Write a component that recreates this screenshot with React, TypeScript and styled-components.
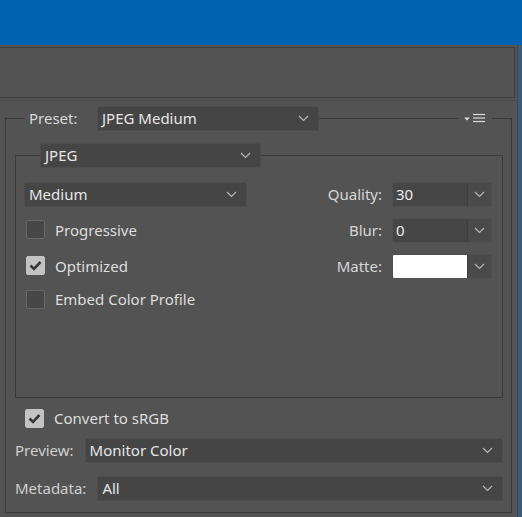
import styled, { createGlobalStyle } from "styled-components";

const GlobalStyle = createGlobalStyle`
  html, body {
    margin: 0;
    padding: 0;
    background: #535353;
  }
  body {
    font-family: "Noto Sans", "Liberation Sans", sans-serif;
    font-size: 15px;
    color: #dadada;
  }
`;

const Screen = styled.div`
  width: 522px;
  height: 517px;
  overflow: hidden;
  display: flex;
  flex-direction: column;
  background: #535353;
`;

const TitleBar = styled.div`
  height: 45px;
  flex-shrink: 0;
  background: #0063b1;
`;

const Body = styled.div`
  flex: 1;
  display: flex;
`;

const Dialog = styled.div`
  width: 517px;
  display: flex;
  flex-direction: column;
`;

const EdgeStrip = styled.div`
  flex: 1;
  border-left: 1px solid #454545;
  background: #3a5b7c;
`;

const TopPanel = styled.div`
  margin: 2px 2px 0 0;
  height: 49px;
  border: 1px solid #3d3d3d;
  border-left: none;
`;

const SettingsFrame = styled.div`
  margin-top: 2px;
  flex: 1;
  padding: 5px 5px 0 5px;
  border-top: 1px solid #4a4a4a;
`;

/* group header: a line broken by a control, like a fieldset legend */
const Header = styled.div`
  display: flex;
  align-items: center;
  height: 25px;
`;

const Line = styled.div<{ $w?: number; $edge?: "left" | "right" }>`
  align-self: flex-end;
  height: 12px;
  ${(p) => (p.$w ? `width: ${p.$w}px;` : "flex: 1;")}
  border-top: 1px solid #3a3a3a;
  ${(p) => (p.$edge ? `border-${p.$edge}: 1px solid #3a3a3a;` : "")}
`;

const GroupBody = styled.div<{ $pad: string }>`
  border: 1px solid #3a3a3a;
  border-top: none;
  padding: ${(p) => p.$pad};
`;

const HeaderLabel = styled.span`
  padding: 0 4px;
  width: 64px;
  color: #d8d8d8;
  margin-top: -1px;
`;

const Select = styled.div<{ $w?: number; $h?: number }>`
  display: flex;
  align-items: center;
  justify-content: space-between;
  box-sizing: border-box;
  ${(p) => (p.$w ? `width: ${p.$w}px;` : "flex: 1;")}
  height: ${(p) => p.$h ?? 25}px;
  padding: 0 9px 0 4px;
  background: #454545;
  border: 1px solid #4d4d4d;
  border-radius: 2px;
  color: #e6e6e6;
  white-space: nowrap;
`;

const SelectText = styled.span`
  margin-top: -1px;
`;

const Chevron = () => (
  <svg width="11" height="7" viewBox="0 0 11 7">
    <polyline points="1,1 5.5,5.5 10,1" fill="none" stroke="#b9b9b9" strokeWidth="1.1" />
  </svg>
);

const MenuIcon = styled.svg`
  margin: 0 6px 0 6px;
  flex-shrink: 0;
`;

const OptionsGrid = styled.div`
  display: grid;
  grid-template-columns: 223px 1fr;
  grid-template-rows: 25px 25px 25px 20px;
  row-gap: 11px;
`;

const RightCell = styled.div`
  display: flex;
  align-items: center;
  justify-content: flex-end;
  gap: 10px;
`;

const FieldLabel = styled.span`
  color: #d6d6d6;
  margin-top: -2px;
`;

const Combo = styled.div`
  display: flex;
  width: 100px;
  height: 25px;
  box-sizing: border-box;
  border: 1px solid #4f4f4f;
  border-radius: 2px;
  overflow: hidden;
`;

const ComboInput = styled.div<{ $swatch?: boolean }>`
  flex: 1;
  display: flex;
  align-items: center;
  padding-left: 3px;
  background: ${(p) => (p.$swatch ? "#ffffff" : "#464646")};
  color: #ececec;
  border-right: 1px solid #3e3e3e;
  span {
    margin-top: -1px;
  }
`;

const ComboButton = styled.div`
  width: 23px;
  display: flex;
  align-items: center;
  justify-content: center;
  background: #4a4a4a;
`;

const CheckRow = styled.label<{ $indent?: number }>`
  display: flex;
  align-items: center;
  gap: 10px;
  padding-left: ${(p) => p.$indent ?? 2}px;
  color: #dedede;
  span {
    margin-top: -2px;
  }
`;

const Box = styled.span<{ $on?: boolean }>`
  width: 19px;
  height: 19px;
  box-sizing: border-box;
  display: flex;
  align-items: center;
  justify-content: center;
  border-radius: 2px;
  border: 1px solid ${(p) => (p.$on ? "#c3c3c3" : "#686868")};
  background: ${(p) => (p.$on ? "#c3c3c3" : "#474747")};
`;

const Checkbox = ({ on }: { on?: boolean }) => (
  <Box $on={on}>
    {on && (
      <svg width="13" height="11" viewBox="0 0 13 11">
        <polyline points="1.5,5.5 5,9 11.5,2" fill="none" stroke="#383838" strokeWidth="2.6" />
      </svg>
    )}
  </Box>
);

const Bottom = styled.div`
  display: flex;
  flex-direction: column;
`;

const FormRow = styled.div<{ $mt: number }>`
  display: flex;
  align-items: center;
  gap: 11px;
  margin-top: ${(p) => p.$mt}px;
`;

const RowLabel = styled.span`
  color: #cfcfcf;
  margin-top: -2px;
`;

const App = () => {
  return (
    <>
      <GlobalStyle />
      <Screen>
        <TitleBar />
        <Body>
          <Dialog>
            <TopPanel />
            <SettingsFrame>
              <Header>
                <Line $w={19} $edge="left" />
                <HeaderLabel>Preset:</HeaderLabel>
                <Select $w={222}>
                  <SelectText>JPEG Medium</SelectText>
                  <Chevron />
                </Select>
                <Line />
                <MenuIcon width="22" height="12" viewBox="0 0 22 12">
                  <polygon points="0,4.5 6,4.5 3,7.5" fill="#dcdcdc" />
                  <line x1="9" y1="1.5" x2="21" y2="1.5" stroke="#dcdcdc" strokeWidth="1.2" />
                  <line x1="9" y1="5" x2="21" y2="5" stroke="#dcdcdc" strokeWidth="1.2" />
                  <line x1="9" y1="8.5" x2="21" y2="8.5" stroke="#dcdcdc" strokeWidth="1.2" />
                </MenuIcon>
                <Line $w={19} $edge="right" />
              </Header>
              <GroupBody $pad="12px 8px 11px 9px">
                <Header>
                  <Line $w={24} $edge="left" />
                  <Select $w={221}>
                    <SelectText>JPEG</SelectText>
                    <Chevron />
                  </Select>
                  <Line $edge="right" />
                </Header>
                <GroupBody $pad="14px 10px 87px 8px">
                  <OptionsGrid>
                    <Select $w={223}>
                      <SelectText>Medium</SelectText>
                      <Chevron />
                    </Select>
                    <RightCell>
                      <FieldLabel>Quality:</FieldLabel>
                      <Combo>
                        <ComboInput>
                          <span>30</span>
                        </ComboInput>
                        <ComboButton>
                          <Chevron />
                        </ComboButton>
                      </Combo>
                    </RightCell>
                    <CheckRow>
                      <Checkbox />
                      <span>Progressive</span>
                    </CheckRow>
                    <RightCell>
                      <FieldLabel>Blur:</FieldLabel>
                      <Combo>
                        <ComboInput>
                          <span>0</span>
                        </ComboInput>
                        <ComboButton>
                          <Chevron />
                        </ComboButton>
                      </Combo>
                    </RightCell>
                    <CheckRow>
                      <Checkbox on />
                      <span>Optimized</span>
                    </CheckRow>
                    <RightCell>
                      <FieldLabel>Matte:</FieldLabel>
                      <Combo>
                        <ComboInput $swatch />
                        <ComboButton>
                          <Chevron />
                        </ComboButton>
                      </Combo>
                    </RightCell>
                    <CheckRow>
                      <Checkbox />
                      <span>Embed Color Profile</span>
                    </CheckRow>
                  </OptionsGrid>
                </GroupBody>
                <Bottom>
                  <FormRow $mt={12}>
                    <CheckRow $indent={10}>
                      <Checkbox on />
                      <span>Convert to sRGB</span>
                    </CheckRow>
                  </FormRow>
                  <FormRow $mt={10}>
                    <RowLabel>Preview:</RowLabel>
                    <Select $h={25}>
                      <SelectText>Monitor Color</SelectText>
                      <Chevron />
                    </Select>
                  </FormRow>
                  <FormRow $mt={13}>
                    <RowLabel>Metadata:</RowLabel>
                    <Select $h={25}>
                      <SelectText>All</SelectText>
                      <Chevron />
                    </Select>
                  </FormRow>
                </Bottom>
              </GroupBody>
            </SettingsFrame>
          </Dialog>
          <EdgeStrip />
        </Body>
      </Screen>
    </>
  );
};

export default App;
